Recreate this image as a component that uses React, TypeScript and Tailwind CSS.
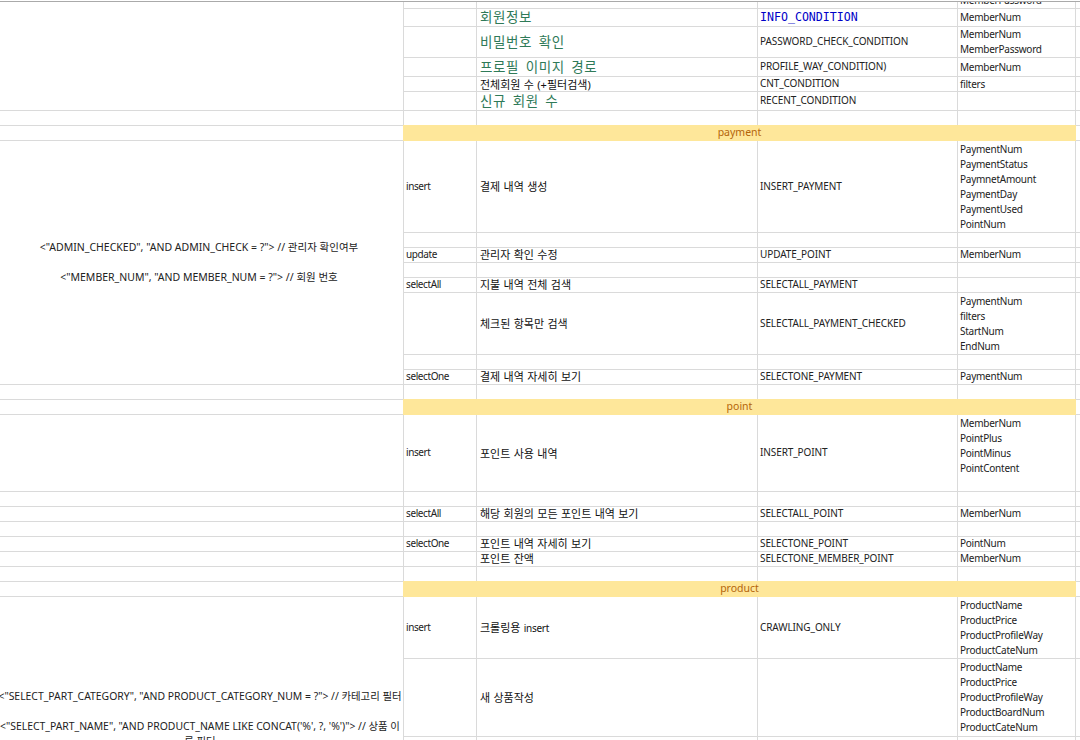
import React from 'react';

type Row = {
  method?: string;
  title?: React.ReactNode;
  big?: boolean;
  query?: string;
  mono?: boolean;
  params?: string[];
  clip?: boolean;
  tight?: boolean;
  band?: string;
  left?: string;
};

const line = 'border-r border-b border-[#dadada]';

const rows: Row[] = [
  { params: ['MemberPassword'], clip: true, left: 'first' },
  { title: '회원정보', big: true, query: 'INFO_CONDITION', mono: true, params: ['MemberNum'] },
  { title: '비밀번호 확인', big: true, query: 'PASSWORD_CHECK_CONDITION', params: ['MemberNum', 'MemberPassword'] },
  { title: '프로필 이미지 경로', big: true, query: 'PROFILE_WAY_CONDITION)', params: ['MemberNum'] },
  { title: '전체회원 수 (+필터검색)', query: 'CNT_CONDITION', params: ['filters'] },
  { title: '신규 회원 수', big: true, query: 'RECENT_CONDITION' },
  {},
  { band: 'payment' },
  { method: 'insert', title: '결제 내역 생성', query: 'INSERT_PAYMENT', params: ['PaymentNum', 'PaymentStatus', 'PaymnetAmount', 'PaymentDay', 'PaymentUsed', 'PointNum'], left: 'payment' },
  {},
  { method: 'update', title: '관리자 확인 수정', query: 'UPDATE_POINT', params: ['MemberNum'], tight: true },
  {},
  { method: 'selectAll', title: '지불 내역 전체 검색', query: 'SELECTALL_PAYMENT', tight: true },
  { title: '체크된 항목만 검색', query: 'SELECTALL_PAYMENT_CHECKED', params: ['PaymentNum', 'filters', 'StartNum', 'EndNum'] },
  {},
  { method: 'selectOne', title: '결제 내역 자세히 보기', query: 'SELECTONE_PAYMENT', params: ['PaymentNum'], tight: true },
  {},
  { band: 'point' },
  { method: 'insert', title: '포인트 사용 내역', query: 'INSERT_POINT', params: ['MemberNum', 'PointPlus', 'PointMinus', 'PointContent', ''] },
  {},
  { method: 'selectAll', title: '해당 회원의 모든 포인트 내역 보기', query: 'SELECTALL_POINT', params: ['MemberNum'], tight: true },
  {},
  { method: 'selectOne', title: '포인트 내역 자세히 보기', query: 'SELECTONE_POINT', params: ['PointNum'], tight: true },
  { title: '포인트 잔액', query: 'SELECTONE_MEMBER_POINT', params: ['MemberNum'], tight: true },
  {},
  { band: 'product' },
  {
    method: 'insert',
    title: (
      <>
        크롤링용 <span className="text-[10px] tracking-[-0.3px]">insert</span>
      </>
    ),
    query: 'CRAWLING_ONLY',
    params: ['ProductName', 'ProductPrice', 'ProductProfileWay', 'ProductCateNum'],
    left: 'product',
  },
  { title: '새 상품작성', params: ['ProductName', 'ProductPrice', 'ProductProfileWay', 'ProductBoardNum', 'ProductCateNum'] },
  {},
];

const LeftCell = ({ name }: { name?: string }) => {
  if (name === 'first') return <div className={`${line} row-span-6`} />;
  if (name === 'payment')
    return (
      <div className={`${line} row-span-8 flex flex-col items-center justify-center whitespace-nowrap pr-[5px] text-[#222]`}>
        <div>{'<"ADMIN_CHECKED", "AND ADMIN_CHECK = ?"> // 관리자 확인여부'}</div>
        <div className="h-[15px]" />
        <div>{'<"MEMBER_NUM", "AND MEMBER_NUM = ?"> // 회원 번호'}</div>
      </div>
    );
  if (name === 'product')
    return (
      <div className={`${line} row-span-3 flex flex-col items-center justify-center whitespace-nowrap pr-[3px] text-[10.4px] text-[#222]`}>
        <div>{'<"SELECT_PART_CATEGORY", "AND PRODUCT_CATEGORY_NUM = ?"> // 카테고리 필터'}</div>
        <div className="h-[15px]" />
        <div>{'<"SELECT_PART_NAME", "AND PRODUCT_NAME LIKE CONCAT(\'%\', ?, \'%\')"> // 상품 이'}</div>
        <div>름 필터</div>
      </div>
    );
  return <div className={line} />;
};

const TableRow = ({ row, covered }: { row: Row; covered: boolean }) => (
  <>
    {!covered && <LeftCell name={row.left} />}
    {row.band ? (
      <>
        <div className="col-span-4 -mt-px -ml-px flex h-[16px] items-center justify-center bg-[#fee79a] pb-px text-[#b4650a]">
          {row.band}
        </div>
        <div className="border-b border-[#dadada]" />
      </>
    ) : (
      <>
        <div className={`${line} flex items-center pb-px pl-[2px] text-[10px] tracking-[-0.4px]`}>{row.method}</div>
        <div className={`${line} flex items-center pl-[3px] ${row.tight ? 'pb-[2px]' : ''}`}>
          {row.title && (
            <span
              className={
                row.big
                  ? 'text-[13.5px] tracking-[0.6px] text-[#2f7a58] [word-spacing:2.5px]'
                  : 'text-[11px] text-[#111] [word-spacing:0.5px]'
              }
            >
              {row.title}
            </span>
          )}
        </div>
        <div className={`${line} flex items-center pb-px pl-[2px] text-[10px] tracking-[-0.1px]`}>
          {row.mono ? (
            <span className="font-['DejaVu_Sans_Mono',monospace] text-[11.6px] tracking-normal text-[#0000c8]">{row.query}</span>
          ) : (
            row.query
          )}
        </div>
        <div
          className={`${line} flex flex-col overflow-hidden pl-[2px] text-[10px] tracking-[-0.25px] ${row.clip ? 'justify-end' : 'justify-center'} ${row.tight ? 'pb-[2px]' : ''}`}
        >
          {row.params?.map((p, i) => (
            <div key={i} className="h-[15px] shrink-0 leading-[15px]">
              {p}
            </div>
          ))}
        </div>
        <div className="border-b border-[#dadada]" />
      </>
    )}
  </>
);

const firstCovered = [1, 2, 3, 4, 5];
const paymentCovered = [9, 10, 11, 12, 13, 14, 15];
const productCovered = [27, 28];

export default function App() {
  const covered = [...firstCovered, ...paymentCovered, ...productCovered];
  return (
    <div className="h-[740px] w-[1080px] overflow-hidden bg-white font-['Noto_Sans','Noto_Sans_CJK_KR',sans-serif] text-[10.5px] leading-[15px] text-[#222]">
      <div className="h-[2px] border-b border-[#aaaaaa]" />
      <div className="grid grid-cols-[404px_73px_281px_200px_118px_4px] grid-rows-[7px_18px_31px_19px_15px_19px_15px_15px_92px_15px_15px_15px_15px_62px_15px_15px_15px_15px_77px_15px_15px_15px_15px_15px_15px_15px_62px_78px_104px]">
        {rows.map((row, i) => (
          <TableRow key={i} row={row} covered={covered.includes(i)} />
        ))}
      </div>
    </div>
  );
}
